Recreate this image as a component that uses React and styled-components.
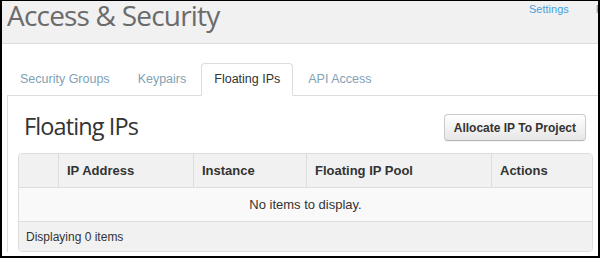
import React from 'react'
import styled, { createGlobalStyle } from 'styled-components'

const GlobalStyle = createGlobalStyle`
    html, body {
        margin: 0;
        padding: 0;
        background: #fff;
    }
    * {
        box-sizing: border-box;
    }
`

const Frame = styled.div`
    width: 600px;
    height: 258px;
    border-style: solid;
    border-color: #000;
    border-width: 1px 2px 2px 2px;
    overflow: hidden;
    background: #fff;
    font-family: "Liberation Sans", Arial, sans-serif;
    color: #333;
`

const Header = styled.div`
    display: flex;
    height: 43px;
    background: #f1f1f1;
    border-bottom: 1px solid #dcdcdc;
`

const Title = styled.h1`
    flex: 1;
    margin: 0;
    padding-left: 5px;
    font-family: "Open Sans", sans-serif;
    font-weight: 400;
    font-size: 28px;
    line-height: 36px;
    margin-top: -4px;
    letter-spacing: -0.8px;
    color: #6b6b6b;
`

const TopNav = styled.div`
    display: flex;
    flex-shrink: 0;
    width: 69px;
    gap: 27px;
    white-space: nowrap;
    padding-top: 2px;
`

const TopLink = styled.a`
    font-size: 11px;
    line-height: 13px;
    color: #4a9fdc;
    text-decoration: none;
`

const Tabs = styled.ul`
    display: flex;
    list-style: none;
    margin: 19px 0 0 0;
    padding: 0 0 0 5px;
`

const Tab = styled.li`
    position: relative;
    margin: 0 2px -1px 0;
    padding: 7px 12px;
    font-size: 12.5px;
    line-height: 17px;
    border: 1px solid ${p => (p.$active ? '#ddd' : 'transparent')};
    border-bottom-color: ${p => (p.$active ? '#fff' : 'transparent')};
    border-radius: 4px 4px 0 0;
    background: ${p => (p.$active ? '#fff' : 'transparent')};
    color: ${p => (p.$active ? '#333' : '#7fa2b4')};
`

const Panel = styled.div`
    margin-left: 5px;
    border-top: 1px solid #ddd;
    border-left: 1px solid #ddd;
    padding: 0 5px 0 10px;
`

const PanelHead = styled.div`
    display: flex;
    justify-content: space-between;
    align-items: flex-start;
    margin-top: 18px;
    padding: 0 7px 0 6px;
`

const Heading = styled.h2`
    margin: -1px 0 0 0;
    font-family: "Open Sans", sans-serif;
    font-weight: 400;
    font-size: 23.5px;
    line-height: 27px;
    letter-spacing: -0.9px;
    color: #333;
`

const Button = styled.button`
    height: 27px;
    padding: 0 9px;
    font-family: "Liberation Sans", Arial, sans-serif;
    font-size: 12px;
    font-weight: bold;
    color: #333;
    background: linear-gradient(#ffffff, #e6e6e6);
    border: 1px solid #ccc;
    border-bottom-color: #b3b3b3;
    border-radius: 4px;
    box-shadow: inset 0 1px 0 rgba(255, 255, 255, 0.2), 0 1px 2px rgba(0, 0, 0, 0.05);
`

const Table = styled.div`
    margin-top: 12px;
    border: 1px solid #ddd;
    border-radius: 4px;
    overflow: hidden;
`

const HeadRow = styled.div`
    display: grid;
    grid-template-columns: 39px 135px 113px 185px 1fr;
    height: 34px;
    background: #f1f1f1;
    border-bottom: 1px solid #ddd;
`

const HeadCell = styled.div`
    display: flex;
    align-items: center;
    padding-left: 8px;
    font-size: 13px;
    font-weight: bold;
    color: #333;
    & + & {
        border-left: 1px solid #ddd;
    }
`

const EmptyRow = styled.div`
    height: 34px;
    display: flex;
    align-items: center;
    justify-content: center;
    background: #f9f9f9;
    border-bottom: 1px solid #ddd;
    font-size: 13px;
    color: #333;
`

const Footer = styled.div`
    height: 29px;
    display: flex;
    align-items: center;
    padding-left: 7px;
    background: #f1f1f1;
    font-size: 12px;
    color: #333;
`

const tabs = ['Security Groups', 'Keypairs', 'Floating IPs', 'API Access']
const columns = ['', 'IP Address', 'Instance', 'Floating IP Pool', 'Actions']

const App = () => {
    return (
        <Frame>
            <GlobalStyle />
            <Header>
                <Title>Access &amp; Security</Title>
                <TopNav>
                    <TopLink href="#">Settings</TopLink>
                    <TopLink href="#">Help</TopLink>
                </TopNav>
            </Header>

            <Tabs>
                {tabs.map(t => (
                    <Tab key={t} $active={t === 'Floating IPs'}>{t}</Tab>
                ))}
            </Tabs>

            <Panel>
                <PanelHead>
                    <Heading>Floating IPs</Heading>
                    <Button>Allocate IP To Project</Button>
                </PanelHead>

                <Table>
                    <HeadRow>
                        {columns.map((c, i) => (
                            <HeadCell key={i}>{c}</HeadCell>
                        ))}
                    </HeadRow>
                    <EmptyRow>No items to display.</EmptyRow>
                    <Footer>Displaying 0 items</Footer>
                </Table>
            </Panel>
        </Frame>
    )
}

export default App
